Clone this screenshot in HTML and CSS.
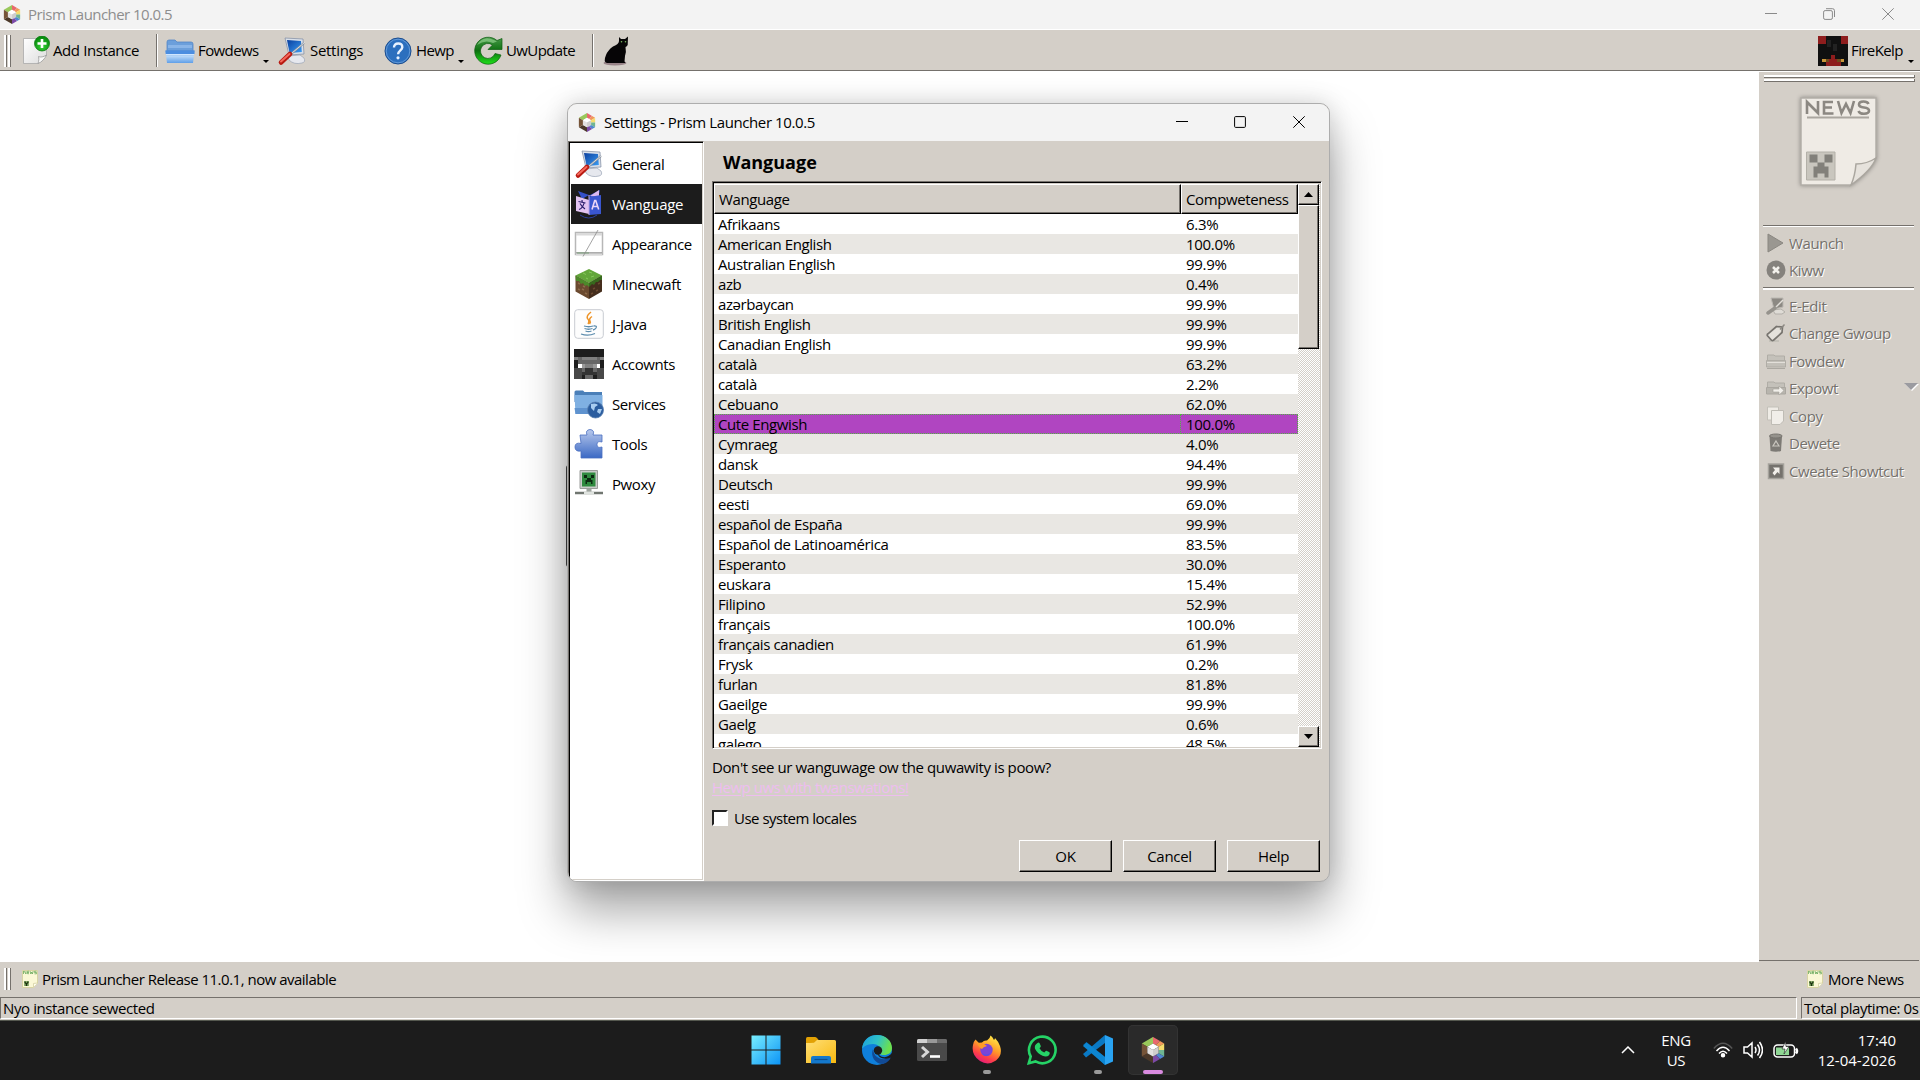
FILE: index.html
```html
<!DOCTYPE html>
<html lang="en">
<head>
    <meta charset="UTF-8">
    <meta name="viewport" content="width=device-width, initial-scale=1.0">
    <title>Prism Launcher 10.0.5</title>
    <link rel="stylesheet" href="styles.css">
</head>
<body>
    <!-- shared icons -->
    <svg class="defs" width="0" height="0">
        <defs>
            <linearGradient id="blue-v" x1="0" y1="0" x2="0" y2="1"><stop offset="0" stop-color="#5b93d6"/><stop offset=".45" stop-color="#b9d8f8"/><stop offset="1" stop-color="#5f9fe8"/></linearGradient>
            <linearGradient id="page-g" x1="0" y1="0" x2="1" y2="1"><stop offset="0" stop-color="#fff"/><stop offset="1" stop-color="#dcdcdc"/></linearGradient>
            <linearGradient id="green-v" x1="0" y1="0" x2="0" y2="1"><stop offset="0" stop-color="#4a9a4a"/><stop offset=".5" stop-color="#0c7010"/><stop offset="1" stop-color="#1fe01a"/></linearGradient>
            <radialGradient id="plus-g" cx=".5" cy=".7" r=".6"><stop offset="0" stop-color="#35d335"/><stop offset="1" stop-color="#078c0d"/></radialGradient>
            <linearGradient id="screen-g" x1="0" y1="0" x2="1" y2="1"><stop offset="0" stop-color="#0a3f9e"/><stop offset="1" stop-color="#3a9df5"/></linearGradient>
            <linearGradient id="puzzle-g" x1="0" y1="0" x2="0" y2="1"><stop offset="0" stop-color="#b9c9ec"/><stop offset="1" stop-color="#3b69c4"/></linearGradient>
            <linearGradient id="win-g" gradientUnits="userSpaceOnUse" x1="0" y1="0" x2="30" y2="30"><stop offset="0" stop-color="#7af0ff"/><stop offset="1" stop-color="#0a92f5"/></linearGradient>
            <linearGradient id="fold-g" x1="0" y1="0" x2="1" y2="1"><stop offset="0" stop-color="#ffdf77"/><stop offset="1" stop-color="#f8b90f"/></linearGradient>
            <linearGradient id="edge-g" x1="0" y1="0" x2="1" y2=".3"><stop offset="0" stop-color="#1a9de0"/><stop offset=".55" stop-color="#2fc2c8"/><stop offset="1" stop-color="#6be04f"/></linearGradient>
            <linearGradient id="fox-g" x1=".8" y1="0" x2=".3" y2="1"><stop offset="0" stop-color="#fff04a"/><stop offset=".45" stop-color="#ff9a28"/><stop offset=".75" stop-color="#ff4048"/><stop offset="1" stop-color="#e0177f"/></linearGradient>
        </defs>
        <symbol id="prism" viewBox="0 0 26 28">
            <path fill="#99c85b" d="M13 0 1 7l6 3.500 6-3.500z"/>
            <path fill="#e8686c" d="M13 0v7l3 1.700 4.500-4.400z"/>
            <path fill="#f0975a" d="M20.500 4.300 16 8.700l3 1.800 6-3.500z"/>
            <path fill="#f5dc6c" d="M25 7l-6 3.500V14h6z"/>
            <path fill="#6fb592" d="M25 14h-6v3.500l6 3.500z"/>
            <path fill="#4f86d0" d="M25 21l-6-3.500-3 1.800 4.500 4.400z"/>
            <path fill="#7c4aa8" d="M20.500 23.700 16 19.300 13 21v7z"/>
            <path fill="#4b3829" d="M13 28v-7l-6-3.500L1 21z"/>
            <path fill="#765438" d="M1 21V7l6 3.500v7z"/>
            <path fill="#fff" d="M13 7 7 10.500l6 3.500 6-3.500z"/>
            <path fill="#e3e1e1" d="M7 10.500v7l6 3.500v-7z"/>
            <path fill="#cfcdcd" d="M19 10.500v7L13 21v-7z"/>
        </symbol>
        <symbol id="add" viewBox="0 0 30 30">
            <path d="M3.500 2.500h23v17l-8 8h-15z" fill="url(#page-g)" stroke="#aaa" stroke-width=".8"/>
            <path d="M18 27.500c1-3 1-5 .5-7 2 1 5 .5 8-1.500-1 3-5 7.500-8.500 8.500z" fill="#fafafa" stroke="#999" stroke-width=".8"/>
            <circle cx="22" cy="7.500" r="7.500" fill="url(#plus-g)" stroke="#0b7d10" stroke-width=".8"/>
            <path d="M22 3v9M17.500 7.500h9" stroke="#fff" stroke-width="2.600"/>
        </symbol>
        <symbol id="folder" viewBox="0 0 30 30">
            <path d="M2 6q0-2 2-2h6l2 2h14q2 0 2 2v7H2z" fill="#6c9fdb" stroke="#5387c6" stroke-width=".8"/>
            <path d="M3 9h24v3H3z" fill="#8ab5e8"/>
            <path d="M.5 14.500h29L28 27H2z" fill="url(#blue-v)"/>
            <path d="M.5 14.500h29v3.500H.7z" fill="#4c8ee0"/>
            <path d="M1 18.500h28" stroke="#cfe6ff"/>
        </symbol>
        <symbol id="settings" viewBox="0 0 30 30">
            <path d="M11 20l12-1 4 3q2 4-2 5-8 2-13-3z" fill="#e6e8ee" stroke="#9aa3b5" stroke-width=".7"/>
            <path d="M8 2l18 1 1 15-15 1z" fill="#d9e0ea" stroke="#7d8aa0" stroke-width=".7"/>
            <path d="M10 4l14 1 .8 11-12.300 1z" fill="url(#screen-g)"/>
            <path d="M27 7 14 18" stroke="#8b939e" stroke-width="2.200"/>
            <path d="M27.500 6.500 15 17" stroke="#e9edf2" stroke-width=".8"/>
            <path d="M13 18 4 26.500" stroke="#b81a12" stroke-width="4.600" stroke-linecap="round"/>
            <path d="M12.500 18 4 25.500" stroke="#f4695c" stroke-width="2" stroke-linecap="round"/>
        </symbol>
        <symbol id="help" viewBox="0 0 30 30">
            <circle cx="15" cy="15" r="13" fill="#2c6fbe" stroke="#1c4d8e" stroke-width="1"/>
            <circle cx="15" cy="15" r="11.800" fill="none" stroke="#6fa3de" stroke-width=".8"/>
            <path d="M11 11.500q0-4 4.200-4t4.100 3.700c0 3-4.200 3.300-4.200 7" fill="none" stroke="#e8f2ff" stroke-width="2.400"/>
            <circle cx="15" cy="21.800" r="1.600" fill="#e8f2ff"/>
        </symbol>
        <symbol id="update" viewBox="0 0 30 30">
            <path d="M24 4.500A13.500 13.500 0 1 0 28 19l-6-1.500A7.500 7.500 0 1 1 19.500 9L15 13.500h14V2.500z" fill="url(#green-v)" stroke="#0c5c10" stroke-width=".7"/>
            <path d="M24 5.500 21 4Q10-1 4 9q8-6 16-2z" fill="#8fce8c" opacity=".7"/>
        </symbol>
        <symbol id="cat" viewBox="0 0 30 30">
            <ellipse cx="14" cy="27" rx="11.500" ry="2.600" fill="#70525e" opacity=".6"/>
            <path d="M18 1 20 3h4l3-2.500-.3 8.500q-.7 1.500-2.200 2 1 5-.5 9l-.5 5.500q1.500 1 .5 1.500H6Q2 26 5 19q2-5 7-8.500Q18 8 18 5z" fill="#060506"/>
            <circle cx="20.500" cy="5.800" r=".8" fill="#7dbb62"/><circle cx="24.500" cy="5.800" r=".8" fill="#7dbb62"/>
        </symbol>
        <symbol id="newspage" viewBox="0 0 16 18">
            <path d="M.5.500h15V13l-4 4.500H.5z" fill="#fbf8d6" stroke="#d8d4a4"/>
            <path d="M1.500 1v3M2 1l2 3V1M7 1.300H5.500v2.400H7M5.500 2.500H7M8 1l.8 3 .8-2 .8 2 .8-3M14.500 1.300h-2v1.200h2v1.300h-2" fill="none" stroke="#6aa85c" stroke-width=".8"/>
            <path d="M2 11h5v5H2z" fill="#8fb070"/>
            <path d="M2.500 11.500h1.300v1.300h1.400v-1.300h1.300v1.300L5.300 14v2H3.700v-2l-1.200-1z" fill="#18320e"/>
            <path d="M11.500 17v-3.500l4-.5" fill="#fffef0" stroke="#cfca9a" stroke-width=".7"/>
        </symbol>
    </svg>

    <div class="titlebar">
        <svg class="app-icon"><use href="#prism"/></svg>
        <span class="title">Prism Launcher 10.0.5</span>
        <div class="win-controls">
            <svg viewBox="0 0 12 12"><path d="M0 5.500h12"/></svg>
            <svg viewBox="0 0 12 12"><rect x=".6" y="2.600" width="8.800" height="8.800" rx="1.500"/><path d="M3 .7h6.500q2 0 2 2V9"/></svg>
            <svg viewBox="0 0 12 12"><path d="M.3.300l11.400 11.400M11.700.300.3 11.700"/></svg>
        </div>
    </div>

    <div class="toolbar">
        <span class="handle"></span>
        <div class="tool add"><svg><use href="#add"/></svg><span>Add Instance</span></div>
        <span class="sep"></span>
        <div class="tool folders"><svg><use href="#folder"/></svg><span>Fowdews</span><i class="drop"></i></div>
        <div class="tool prefs"><svg><use href="#settings"/></svg><span>Settings</span></div>
        <div class="tool hewp"><svg><use href="#help"/></svg><span>Hewp</span><i class="drop"></i></div>
        <div class="tool update"><svg><use href="#update"/></svg><span>UwUpdate</span></div>
        <span class="sep"></span>
        <div class="tool meow"><svg><use href="#cat"/></svg></div>
        <div class="tool account">
            <svg viewBox="0 0 8 8" shape-rendering="crispEdges">
                <path fill="#101010" d="M0 0h8v8H0z"/>
                <path fill="#8e1d1d" d="M0 0h2v2H0zM6 0h2v2H6zM2 7h4v1H2zM3 6h2v1H3zM3.500 5h1v1h-1z"/>
                <path fill="#222" d="M2.500 1h1v2h-1zM4 2h1v2H4z"/>
                <path fill="#c8963a" d="M1 6h1v1H1zM6 6h1v1H6z"/>
                <path fill="#6f4a1c" d="M2 6h1v1H2zM5 6h1v1H5z"/>
            </svg><span>FireKelp</span><i class="drop"></i>
        </div>
    </div>

    <div class="workspace">
        <div class="instances"></div>
        <div class="sidebar">
            <span class="bar"></span>
            <span class="bar"></span>
            <svg class="news-big" viewBox="0 0 80 92">
                <path d="M2 2h75v60L52 89H2z" fill="#efebe5" stroke="#b2aea8" stroke-width="1.500"/>
                <g fill="none" stroke="#8c8882" stroke-width="2.600">
                    <path d="M8 18V6l11 11V5M34 6H25v11.500h9.500M25 11.500h8M39 5l3.500 12L47 8l4.500 9L55 5M69.500 8q-1-2.500-5-2.500-4.500 0-4.500 3 0 2.500 5 3 5 .5 5 3.300t-5 3q-4.500 0-5.500-2.800"/>
                    <path d="M8 21.500h62" stroke="#aaa69f" stroke-width="2"/>
                </g>
                <path d="M7.500 56h28.500v28H7.500z" fill="#c9c6be" stroke="#b3b0a8"/>
                <path d="M10.500 58.500h8v8h7v-8h8v8h-8v4h4v11h-4v-4h-7v4h-4v-11h4v-4h-8z" fill="#82807a"/>
                <path d="M52 89q4-9 5-21 11 0 20-6-4 12-25 27z" fill="#e6e2dc" stroke="#aaa69f" stroke-width="1.500"/>
            </svg>
            <hr>
            <div class="action"><svg viewBox="0 0 20 20"><path d="M2 1l15 9-15 9z" fill="#9a9791" stroke="#8a8781"/></svg>Waunch</div>
            <div class="action"><svg viewBox="0 0 20 20"><circle cx="10" cy="10" r="9.500" fill="#85827d"/><path d="M7 7l6 6M13 7l-6 6" stroke="#f3f1ec" stroke-width="2.500"/></svg>Kiww</div>
            <hr class="second">
            <div class="action"><svg viewBox="0 0 20 20"><path d="M7 14l8-1 4 3-3 2H9z" fill="#dfdcd6" stroke="#b3b0aa"/><path d="M5 2h12v9l-9 2z" fill="#8c8983" stroke="#bbb8b2"/><path d="M17 4 9 12" stroke="#e2dfd9" stroke-width="1.500"/><path d="M9 12l-7 5" stroke="#96938d" stroke-width="3.500" stroke-linecap="round"/></svg>E-Edit</div>
            <div class="action"><svg viewBox="0 0 20 20"><path d="M3 18h10" stroke="#bfbcb5" stroke-width="1.500"/><path d="M10.500 3.500 16.500 4l-.5 5.500-8.500 7.700Q6 18 5 16.800l-3.500-4Q.8 11.600 2 10.800z" fill="#e4e1db" stroke="#77746f" stroke-width="1.700"/><path d="M14 6.500l4.500-5" stroke="#8c8983" stroke-width="1.500"/></svg>Change Gwoup</div>
            <div class="action"><svg viewBox="0 0 20 20"><path d="M1.500 4H8l1 1h9.500v5h-17z" fill="#c4c1ba" stroke="#b0ada6"/><path d="M.5 9.500h19V16H.5z" fill="#c2bfb8" stroke="#b0ada6"/><path d="M1 11.500h18" stroke="#e3e0da"/><path d="M1 17.500h18" stroke="#aba8a1"/></svg>Fowdew</div>
            <div class="action"><svg viewBox="0 0 20 20"><path d="M1.500 4H8l1 1h9.500v5h-17z" fill="#c4c1ba" stroke="#b0ada6"/><path d="M.5 9.500h19V16H.5z" fill="#b8b5ae" stroke="#aaa7a0"/><path d="M7 11h6V8l5 4.500-5 4.500v-3H7z" fill="#f1efea" stroke="#a29f99" stroke-width=".6"/></svg>Expowt<i class="more"></i></div>
            <div class="action"><svg viewBox="0 0 20 20"><path d="M1.500 1h11v13h-11z" fill="#efece6" stroke="#c3c0b9"/><path d="M5.500 4.500h12V15L14 18.500H5.500z" fill="#f1eee9" stroke="#bfbcb5"/></svg>Copy</div>
            <div class="action"><svg viewBox="0 0 20 20"><path d="M3.500 3h12.500l-1 15q-5 1.500-10.500 0z" fill="#7d7a75"/><ellipse cx="9.800" cy="3" rx="6.300" ry="2" fill="#95928c" stroke="#77746f"/><path d="M10 8l3 5H7z" fill="none" stroke="#c9c6bf" stroke-width="1.200"/></svg>Dewete</div>
            <div class="action"><svg viewBox="0 0 20 20"><path d="M2.500 3h15v14.500h-15z" fill="#75726d" stroke="#a5a29c" stroke-width="1.500"/><path d="M7 6.500h6.500V13l-2-2-3 3.500L6.500 12 9 9z" fill="#f1eee9"/></svg>Cweate Showtcut</div>
            <span class="edge"></span>
        </div>
    </div>

    <div class="newsbar">
        <span class="handle"></span>
        <svg><use href="#newspage"/></svg>
        <span class="headline">Prism Launcher Release 11.0.1, now available</span>
        <svg class="push"><use href="#newspage"/></svg>
        <span class="more-news">More News</span>
    </div>
    <div class="statusbar">
        <div class="cell grow">Nyo instance sewected</div>
        <div class="cell playtime">Total playtime: 0s</div>
    </div>

    <div class="taskbar">
        <div class="apps">
            <div class="app"><svg viewBox="0 0 30 30"><path d="M.5.500h14v14H.5zM15.500.500h14v14h-14zM.5 15.500h14v14H.5zM15.500 15.500h14v14h-14z" fill="url(#win-g)"/></svg></div>
            <div class="app"><svg viewBox="0 0 30 30"><path d="M0 3.500Q0 2 1.500 2H9q1 0 2 1l2 2.500L9 12H0z" fill="#e2a104"/><path d="M0 8q4 0 8-.2L11 5h17.500Q30 5 30 6.500V28H0z" fill="url(#fold-g)"/><path d="M5 28.500V23q0-2 2-2h16q2 0 2 2v5.500z" fill="#1478cc"/><path d="M8.500 24.500h13" stroke="#0b4f91" stroke-width="1.200"/></svg></div>
            <div class="app"><svg viewBox="0 0 30 30"><circle cx="15" cy="15" r="15" fill="#0f7fdb"/><path d="M0 14C1 4 8 0 15 0c9 0 15 6 15 13 0 5-4 7-8 7-5 0-5-2-4-4 1-3-1-7-7-7C5 9 1 12 0 14z" fill="url(#edge-g)"/><path d="M11 14c-3 7 2 15 10 15 4-1 7-4 8-7-6 4-17 3-18-8z" fill="#114a95"/><path d="M17 20c5 4 9 2 13-2l0 4.500-1.500 0C24 25 15 24 15 16z" fill="#1c1c1c"/><circle cx="16" cy="15.500" r="4.200" fill="#1c1c1c"/></svg></div>
            <div class="app"><svg viewBox="0 0 30 30"><rect y="4" width="30" height="22" rx="1.500" fill="#4a4a4a"/><path d="M0 8V5.500Q0 4 1.500 4H10v4z" fill="#d0d0d0"/><path d="M10 4h10v4H10z" fill="#999"/><path d="M20 4h8.500Q30 4 30 5.500V8H20z" fill="#6d6d6d"/><path d="M5 12l5.500 5L5 22" fill="none" stroke="#d8d8d8" stroke-width="3"/><path d="M13 21.500h10" stroke="#fff" stroke-width="2.600"/></svg></div>
            <div class="app"><svg viewBox="0 0 30 30"><path d="M3.500 4.500 7 8l3-.5Q12 5 15 5.500l1-1Q18 3 18.500.500q2 1 3.500 4.500 1-1 1-2 3 3 5 8 3 9-4 14.500Q16 31 8 26-1 20 1 10q.5-3.500 2.500-5.500z" fill="url(#fox-g)"/><circle cx="14.500" cy="15" r="6.200" fill="#7a45d8"/><path d="M5 8q4-1 7 1l3 2q-4 1-5 3-3-1-5-6z" fill="#ff9a28"/><path d="M10 18q4 3 8 0-1 3-4 3t-4-3z" fill="#5b4fe0"/></svg><i></i></div>
            <div class="app"><svg viewBox="0 0 30 30"><path d="M1.800 28.200 3.700 21.500A13.300 13.300 0 1 1 8.500 26.400z" fill="none" stroke="#25d366" stroke-width="2.600"/><path d="M10.500 8q1-.8 2 0l1.300 3q.3.800-1.300 2.200 1.500 3 4.800 4.400 1.400-2 2.200-1.800l3 1.500q.8 1-.5 3-2.500 2.200-6.500.5-5-2-7.500-7-1-3.500 2.500-5.800z" fill="#25d366"/></svg></div>
            <div class="app"><svg viewBox="0 0 30 30"><path d="M22 0 4 17.500 0 20l3.500 3L22 8z" fill="#0065a9" transform="matrix(1 0 0 -1 0 30)"/><path d="M0 19l3 3.500L22 8V0z" fill="#0a79c4"/><path d="M0 11l3.500-3.500L22 22v8z" fill="#0d86d2"/><path d="M22 0l8 3.500v23L22 30z" fill="#29a3f2"/></svg><i></i></div>
            <div class="app active"><svg viewBox="0 0 30 30"><use href="#prism" x="2" y="1" width="26" height="28"/></svg><i></i></div>
        </div>
        <div class="tray">
            <svg class="chev" viewBox="0 0 14 8"><path d="M1 7l6-6 6 6"/></svg>
            <div class="lang">ENG<br>US</div>
            <svg class="wifi" viewBox="0 0 20 16"><path d="M.8 6.500Q10-4 19.200 6.500" stroke="#555"/><path d="M3.500 9Q10 1.500 16.500 9M6 11.500q4-4.500 8 0"/><circle cx="10" cy="13.300" r="1.500" fill="#fff"/></svg>
            <svg class="sound" viewBox="0 0 20 18"><path d="M1 6h3.500L9 2v14l-4.500-4H1zM12 6q2 3 0 6M14.500 3.500q4 5.500 0 11M16.500 1q6 8 0 16"/></svg>
            <svg class="battery" viewBox="0 0 26 18"><rect x="1" y="4" width="20.500" height="12" rx="3.500"/><path d="M3 6.500h13V14H3z" fill="#8fd694" stroke="none"/><path d="M23 7.500q2 2.500 0 5" stroke-width="2.500"/><path d="M12.500.500 9 8h3l-1 5 5-7.500h-3z" fill="#fff" stroke="#1c1c1c" stroke-width=".6"/></svg>
            <div class="clock">17:40<br>12-04-2026</div>
        </div>
    </div>

    <!-- settings window -->
    <div class="dialog-behind"></div>
    <div class="dialog">
        <div class="dialog-title">
            <svg class="app-icon"><use href="#prism"/></svg>
            <span>Settings - Prism Launcher 10.0.5</span>
            <div class="win-controls">
                <svg viewBox="0 0 12 12"><path d="M0 5.500h12"/></svg>
                <svg viewBox="0 0 12 12"><rect x=".6" y=".6" width="10.800" height="10.800" rx="1"/></svg>
                <svg viewBox="0 0 12 12"><path d="M.3.300l11.400 11.400M11.700.300.3 11.700"/></svg>
            </div>
        </div>
        <div class="dialog-body">
            <div class="pages">
                <div class="page"><svg><use href="#settings"/></svg>General</div>
                <div class="page selected"><svg viewBox="0 0 30 30"><path d="M4 2l11 4-7 4zM26 1l-12 6 10 3z" fill="#3450c8"/><path d="M25 1l-9 6 9 1z" fill="#dcb9ee"/><path d="M2 7l13 4v14L2 22z" fill="#e2c4f2"/><path d="M15 8l12-2v19l-12 1z" fill="#3a56cf"/><path d="M15 6v20" stroke="#bda5e8"/><path d="M4.500 12.500l7 1.500M8 11l.3 2.500M10 14q-1 5-5 6.500M6 14.500q2 3.500 5 5.500" fill="none" stroke="#2c1f6e" stroke-width="1.200"/><path d="M18 20.500l2.700-9h1l3 9M19 17.500h5" fill="none" stroke="#ecd5f8" stroke-width="1.600"/><path d="M6 26q9 6 17 0" fill="none" stroke="#2b3f9c"/></svg>Wanguage</div>
                <div class="page"><svg viewBox="0 0 30 30"><path d="M1.500 3.500h27v22h-27z" fill="#fff" stroke="#b7b7b7" stroke-width="1.500"/><path d="M2 4h26v2.500H2zM2 24h26v2.500H2z" fill="#dadada"/><path d="M2 23.800h26" stroke="#8b8b8b"/><path d="M3 24h12" stroke="#6f9f6f" stroke-width=".8"/><path d="M9 27.500 24 1" stroke="#8b8b8b" stroke-width=".8"/></svg>Appearance</div>
                <div class="page"><svg viewBox="0 0 30 30"><path d="M15 0l13 6.500L15 14 1.500 6.500z" fill="#62a63a"/><path d="M1.500 6.500 15 14v16L1.500 22.500z" fill="#6b4a30"/><path d="M28 6.500 15 14v16l13-7.500z" fill="#452e1d"/><path d="M1.500 6.500 15 14v4l-2-2-2 1-2-3-2 1-2-3-3 0z" fill="#4c8a2a"/><path d="M28 6.500 15 14v4l3-3 2 1 2-3 2 0 2-2 2 0z" fill="#376a1d"/><path d="M9 4l3 1.500M15 3l3 1M17 8l3-1M12 9l2 1" stroke="#86c95a"/><path d="M4 14l2 1M8 20l2 1M4 20l2 1M11 24l2 1M9 17l2 1" stroke="#8d6a4a" stroke-width="1.500"/><path d="M19 20l2-1M24 15l2-1M22 22l2-1M17 25l2-1" stroke="#6b4a30" stroke-width="1.500"/></svg>Minecwaft</div>
                <div class="page"><svg viewBox="0 0 30 30"><rect x=".7" y=".7" width="28.600" height="28.600" rx="3" fill="#fdfdfd" stroke="#c9ccd2"/><path d="M17 3q-5 4-3.500 6.500Q16 12 14 15M18 7.500q-3.500 2.500-2 4.500 1 1.500-.5 3" fill="none" stroke="#ee9428" stroke-width="1.500"/><path d="M10 17q5 1.500 9 0M10.500 19.500q4 1.500 8 0M11.500 22q3 1.200 6 0M7 25q7 2.500 14-.5M19.500 17q4-.5 2.500 2-1 1.500-3 2" fill="none" stroke="#5c8cad" stroke-width="1.300"/></svg>J-Java</div>
                <div class="page"><svg viewBox="0 0 8 8" shape-rendering="crispEdges"><path fill="#1e1e1e" d="M0 0h8v8H0z"/><path fill="#666" d="M1 2h6v4H1z"/><path fill="#808080" d="M0 2h1v1H0zM2 2h4v1H2zM3 4h2v1H3zM7 2h1v1H7z"/><path fill="#484848" d="M0 5h2v3H0zM6 5h2v3H6z"/><path fill="#999" d="M2 4h1v1H2zM5 4h1v1H5z"/><path fill="#fff" d="M1 4h1v1H1zM6 4h1v1H6z"/><path fill="#333" d="M3 5h2v1H3zM2 6h4v1H2z"/><path fill="#666" d="M3 7h2v1H3z"/></svg>Accownts</div>
                <div class="page"><svg viewBox="0 0 30 30"><path d="M.5 3q0-1.500 1.500-1.500h7L10.500 3H28v10H.5z" fill="#4a7fb8"/><path d="M.5 6h28v19H1.500z" fill="#7fb0e2"/><path d="M.5 19h28v6H1.500z" fill="#5f93cf"/><circle cx="21.500" cy="21" r="8" fill="#2b5d9f" stroke="#5a80b0" stroke-width=".8"/><path d="M17 15q5-1.500 7 1l-3 2-1 4-3-3zM24 20l4 0-2 5-3-2z" fill="#a9cdf0"/></svg>Services</div>
                <div class="page"><svg viewBox="0 0 30 30"><path d="M6 6h7q-2-5 3-5.500 5 .5 3 5.500h9v7q-5-1.500-5 2.500t5 2.500V29H7v-7Q1 23 1 18t6-3.500z" fill="url(#puzzle-g)" stroke="#4a6fc0" stroke-width=".8"/></svg>Tools</div>
                <div class="page"><svg viewBox="0 0 30 30"><path d="M6 1.500h17.500v18H6z" fill="#c9ccc9" stroke="#9a9d9a"/><path d="M8 3.500h13.500v14H8z" fill="#2f8a3f"/><path d="M10 6h3v3h4V6h3v3h-3v2h1.500v4H17v-2h-4v2h-1.500v-4H13V9h-3z" fill="#0b2a10"/><path d="M12.500 19.500h5V24h-5z" fill="#9da39d"/><path d="M1 24h28" stroke="#707670" stroke-width="2.500"/><path d="M10 24h10" stroke="#dfe3df" stroke-width="3"/></svg>Pwoxy</div>
            </div>
            <div class="content">
                <h2>Wanguage</h2>
                <div class="table">
                    <div class="rows">
                        <div class="head"><span>Wanguage</span><span>Compweteness</span></div>
                        <div class="row"><span>Afrikaans</span><span>6.3%</span></div>
                        <div class="row"><span>American English</span><span>100.0%</span></div>
                        <div class="row"><span>Australian English</span><span>99.9%</span></div>
                        <div class="row"><span>azb</span><span>0.4%</span></div>
                        <div class="row"><span>azərbaycan</span><span>99.9%</span></div>
                        <div class="row"><span>British English</span><span>99.9%</span></div>
                        <div class="row"><span>Canadian English</span><span>99.9%</span></div>
                        <div class="row"><span>català</span><span>63.2%</span></div>
                        <div class="row"><span>català</span><span>2.2%</span></div>
                        <div class="row"><span>Cebuano</span><span>62.0%</span></div>
                        <div class="row current"><span>Cute Engwish</span><span>100.0%</span></div>
                        <div class="row"><span>Cymraeg</span><span>4.0%</span></div>
                        <div class="row"><span>dansk</span><span>94.4%</span></div>
                        <div class="row"><span>Deutsch</span><span>99.9%</span></div>
                        <div class="row"><span>eesti</span><span>69.0%</span></div>
                        <div class="row"><span>español de España</span><span>99.9%</span></div>
                        <div class="row"><span>Español de Latinoamérica</span><span>83.5%</span></div>
                        <div class="row"><span>Esperanto</span><span>30.0%</span></div>
                        <div class="row"><span>euskara</span><span>15.4%</span></div>
                        <div class="row"><span>Filipino</span><span>52.9%</span></div>
                        <div class="row"><span>français</span><span>100.0%</span></div>
                        <div class="row"><span>français canadien</span><span>61.9%</span></div>
                        <div class="row"><span>Frysk</span><span>0.2%</span></div>
                        <div class="row"><span>furlan</span><span>81.8%</span></div>
                        <div class="row"><span>Gaeilge</span><span>99.9%</span></div>
                        <div class="row"><span>Gaelg</span><span>0.6%</span></div>
                        <div class="row"><span>galego</span><span>48.5%</span></div>
                    </div>
                    <div class="scroll">
                        <div class="arrow"><svg viewBox="0 0 9 5"><path d="M0 5 4.500 0 9 5z"/></svg></div>
                        <div class="thumb"></div>
                        <div class="arrow down"><svg viewBox="0 0 9 5"><path d="M0 0l4.500 5L9 0z"/></svg></div>
                    </div>
                </div>
                <p>Don't see ur wanguwage ow the quwawity is poow?<br><a href="#">Hewp uws with twanswations!</a></p>
                <label class="check"><i></i>Use system locales</label>
                <div class="buttons">
                    <button>OK</button>
                    <button>Cancel</button>
                    <button>Help</button>
                </div>
            </div>
        </div>
    </div>
</body>
</html>
```
FILE: styles.css
```css
* {
    box-sizing: border-box;
}
body {
    margin: 0;
    width: 1920px;
    height: 1080px;
    overflow: hidden;
    display: flex;
    flex-direction: column;
    font: 15px/20px "Open Sans", "Noto Sans", sans-serif;
    letter-spacing: -0.4px;
    color: #000;
    background: #d4cfc8;
    white-space: nowrap;
}
.defs {
    position: absolute;
}

/* main window title */
.titlebar {
    height: 30px;
    display: flex;
    align-items: center;
    padding: 0 0 1px 3px;
    background: #f3f3f3;
    border-bottom: 1px solid #fff;
    color: #8e8e8e;
}
.app-icon {
    width: 18px;
    height: 19px;
}
.title {
    margin-left: 7px;
    letter-spacing: -0.55px;
}
.win-controls {
    margin-left: auto;
    display: flex;
}
.win-controls svg {
    width: 12px;
    height: 12px;
    margin: 0 23.2px;
    fill: none;
    stroke: #8a8a8a;
    overflow: visible;
}
.titlebar .win-controls {
    margin-right: 3px;
}

/* toolbars */
.toolbar {
    height: 42px;
    display: flex;
    align-items: center;
    padding-left: 4px;
    border-bottom: 1px solid #fff;
    box-shadow: inset 0 -1px #75716c;
}
.handle {
    width: 7px;
    height: 32px;
    border: solid;
    border-width: 0 1px 0 2px;
    border-color: #75716c #75716c #75716c #fff;
    background: linear-gradient(to right, #75716c 1px, #d4cfc8 1px, #d4cfc8 2px, #fff 2px);
}
.tool {
    height: 40px;
    display: flex;
    align-items: center;
    flex: none;
}
.tool svg {
    width: 30px;
    height: 30px;
    margin-right: 3px;
}
.tool span {
    padding-bottom: 1px;
}
.tool .drop {
    margin: 22px 0 0 auto;
    border: 3px solid transparent;
    border-top-color: #000;
    border-bottom: 0;
}
.sep {
    width: 2px;
    height: 33px;
    background: #75716c;
    border-right: 1px solid #fff;
}
.add {
    width: 136px;
    margin-left: 9px;
}
.add + .sep {
    margin-right: 7px;
}
.folders {
    width: 104px;
    margin-right: 8px;
    letter-spacing: -0.6px;
}
.prefs {
    width: 106px;
    letter-spacing: -0.3px;
}
.hewp {
    width: 81px;
    margin-right: 9px;
    letter-spacing: -0.6px;
}
.update {
    width: 119px;
    letter-spacing: -0.6px;
}
.meow {
    margin-left: 7px;
}
.account {
    width: 96px;
    margin: 0 6px 0 auto;
    letter-spacing: -0.6px;
}

/* workspace */
.workspace {
    flex: 1;
    display: flex;
}
.instances {
    flex: 1;
    background: #fff;
}
.sidebar {
    width: 161px;
    padding: 3px 5px 1px 4px;
    display: flex;
    flex-direction: column;
}
.bar {
    height: 3px;
    margin: 0 0 1px 1px;
    background: #fff;
    border-bottom: 1px solid #75716c;
    border-right: 1px solid #75716c;
}
.news-big {
    width: 80px;
    height: 92px;
    margin: 13px 0 0 36px;
    filter: drop-shadow(0 0 2px rgba(0, 0, 0, .35));
}
.sidebar hr {
    width: 151px;
    height: 2px;
    margin: 37px 0 2px;
    border: 0;
    background: #75716c;
    border-bottom: 1px solid #fff;
}
.sidebar hr.second {
    height: 3px;
    border-bottom-width: 2px;
    margin: 3px 0 2px;
}
.action {
    height: 27.5px;
    padding-left: 3px;
    display: flex;
    align-items: center;
    color: #75716c;
    text-shadow: 1px 1px #fff;
}
.action svg {
    width: 20px;
    height: 20px;
    margin-right: 3px;
}
.more {
    margin: -3px -3px 0 auto;
    border: 7px solid transparent;
    border-top-color: #9b9ba0;
    border-bottom: 0;
    filter: drop-shadow(1px 1px #fff);
}
.edge {
    height: 1px;
    margin: auto -4px 0 -4px;
    background: #75716c;
}
.newsbar {
    height: 35px;
    display: flex;
    align-items: center;
    padding: 0 0 2px 4px;
}
.newsbar .handle {
    height: 22px;
    margin-right: 11px;
}
.newsbar svg {
    width: 16px;
    height: 18px;
    margin-right: 4px;
}
.newsbar .push {
    margin: 0 5px 0 auto;
}
.headline {
    letter-spacing: -0.5px;
}
.more-news {
    width: 92px;
}
.statusbar {
    height: 24px;
    display: flex;
    gap: 4px;
    border-bottom: 1px solid #55584f;
}
.cell {
    height: 22px;
    padding-left: 2px;
    line-height: 20px;
    border: 1px solid #75716c;
    border-right-color: #fff;
    border-bottom-color: #fff;
}
.grow {
    flex: 1;
}
.playtime {
    width: 119px;
    border-right: 0;
    letter-spacing: -0.45px;
}

/* taskbar */
.taskbar {
    height: 59px;
    display: flex;
    background: #1c1c1c;
    color: #fff;
}
.apps {
    display: flex;
    margin-left: 741px;
    padding-top: 4px;
    gap: 5.300px;
}
.app {
    position: relative;
    width: 50px;
    height: 50px;
    padding: 10px;
    border-radius: 5px;
}
.app svg {
    width: 30px;
    height: 30px;
}
.app i {
    position: absolute;
    bottom: 1px;
    left: 21px;
    width: 8px;
    height: 4px;
    border-radius: 2px;
    background: #9a9a9a;
}
.active {
    background: #2a2a2a;
    box-shadow: inset 0 0 0 1px #333;
}
.active svg {
    padding: 1px;
}
.active i {
    left: 15px;
    width: 20px;
    background: #d98be0;
}
.tray {
    flex: 1;
    display: flex;
    align-items: center;
    justify-content: flex-end;
    padding: 0 24px 1px 0;
}
.tray svg {
    fill: none;
    stroke: #fff;
    stroke-width: 1.5;
}
.chev {
    width: 14px;
    height: 8px;
}
.lang {
    width: 40px;
    margin: 0 17px 0 21px;
    text-align: center;
}
.wifi {
    width: 20px;
    height: 16px;
}
.sound {
    width: 20px;
    height: 18px;
    margin: 0 10px;
}
.battery {
    width: 26px;
    height: 18px;
}
.clock {
    width: 97px;
    text-align: right;
    letter-spacing: 0;
}

/* settings dialog floats over the window */
.dialog-behind {
    position: absolute;
    left: 566px;
    top: 465px;
    width: 8px;
    height: 102px;
    border-radius: 3px;
    background: #444;
}
.dialog {
    position: absolute;
    left: 567px;
    top: 103px;
    width: 763px;
    height: 779px;
    display: flex;
    flex-direction: column;
    overflow: hidden;
    border: 1px solid #adadad;
    border-radius: 10px;
    background: #d4cfc8;
    box-shadow: 0 28px 48px rgba(0, 0, 0, .36), 0 0 24px rgba(0, 0, 0, .14);
}
.dialog-title {
    height: 37px;
    display: flex;
    align-items: center;
    padding: 0 1px 1px 10px;
    background: #f3f3f3;
}
.dialog-title span {
    margin-left: 8px;
}
.dialog-title .win-controls svg {
    stroke: #000;
}
.dialog-body {
    flex: 1;
    display: flex;
}
.pages {
    width: 136px;
    padding: 2px 1px 1px 2px;
    background: #fff;
    border: 1px solid #75716c;
    border-right-color: #fff;
    border-bottom-color: #fff;
    box-shadow: inset 1px 1px #000, inset -1px -1px #d4cfc8;
}
.page {
    height: 40px;
    display: flex;
    align-items: center;
    padding-left: 3px;
}
.page svg {
    width: 30px;
    height: 30px;
    margin-right: 8px;
}
.selected {
    background: #1c1c1c;
    color: #fff;
    letter-spacing: -0.3px;
}
.content {
    flex: 1;
    display: flex;
    flex-direction: column;
    padding: 0 7px 9px 8px;
}
h2 {
    height: 40px;
    margin: 0 0 0 11px;
    font-size: 18px;
    line-height: 42px;
    letter-spacing: 0;
}
.table {
    width: 610px;
    height: 568px;
    display: flex;
    padding: 2px 1px 1px;
    border: 1px solid #fff;
    border-top-color: #75716c;
    border-left-color: #75716c;
    box-shadow: inset 1px 1px #000, inset -1px -1px #d4cfc8;
    overflow: hidden;
}
.rows {
    width: 584px;
    height: 563px;
    overflow: hidden;
}
.head,
.row {
    display: grid;
    grid-template-columns: 467px 117px;
}
.head span {
    height: 30px;
    padding-left: 4px;
    line-height: 28px;
    border: 1px solid #fff;
    border-right-color: #000;
    border-bottom-color: #000;
    box-shadow: inset -1px -1px #75716c;
}
.row {
    height: 20px;
    background: #fff;
}
.row:nth-child(odd) {
    background: #e9e7e3;
}
.row span {
    padding-left: 4px;
}
.row span:last-child {
    padding-left: 5px;
    letter-spacing: -0.3px;
}
.row.current {
    background: #b045c1;
}
.row.current span {
    line-height: 18px;
    padding-left: 3px;
    border: 1px dotted #4fba3e;
}
.row.current span:last-child {
    padding-left: 4px;
    border-left: 0;
    padding-left: 5px;
}
.scroll {
    width: 22px;
    height: 563px;
    display: flex;
    flex-direction: column;
    background: repeating-conic-gradient(#d4cfc8 0 25%, #fff 0 50%) 0 0 / 2px 2px;
}
.arrow,
.thumb,
button {
    background: #d4cfc8;
    border: 1px solid #fff;
    border-right-color: #000;
    border-bottom-color: #000;
    box-shadow: inset -1px -1px #75716c;
}
.arrow {
    width: 21px;
    height: 21px;
    display: flex;
    align-items: center;
    justify-content: center;
}
.arrow svg {
    width: 9px;
    height: 5px;
}
.thumb {
    width: 21px;
    height: 144px;
}
.down {
    margin-top: auto;
}
.content p {
    margin: 8px 0 0;
}
.content a {
    color: #eebdf0;
    text-underline-offset: 2px;
    letter-spacing: -0.5px;
}
.check {
    display: flex;
    align-items: center;
    gap: 6px;
    margin-top: 11px;
    letter-spacing: -0.5px;
}
.check i {
    width: 16px;
    height: 16px;
    background: #fff;
    border: 2px solid #000;
    border-color: #222 #fff #fff #222;
}
.buttons {
    display: flex;
    justify-content: flex-end;
    gap: 11px;
    margin-top: auto;
    padding-right: 2px;
}
button {
    width: 93px;
    height: 32px;
    padding: 0;
    font: inherit;
    letter-spacing: -0.3px;
}
```
